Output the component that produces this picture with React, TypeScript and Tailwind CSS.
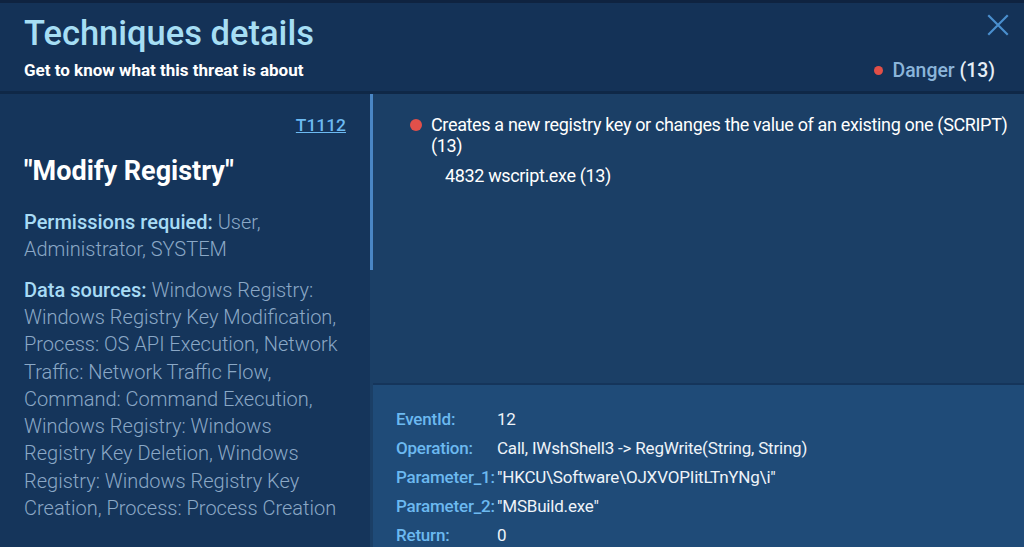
import React from "react";

const rows: [string, string][] = [
  ["EventId:", "12"],
  ["Operation:", "Call, IWshShell3 -> RegWrite(String, String)"],
  ["Parameter_1:", "\"HKCU\\Software\\OJXVOPIitLTnYNg\\i\""],
  ["Parameter_2:", "\"MSBuild.exe\""],
  ["Return:", "0"],
];

function App() {
  return (
    <div
      className="w-[1024px] h-[547px] overflow-hidden flex flex-col bg-[#143257] border-t-[3px] border-[#0f2340]"
      style={{ fontFamily: "Roboto, 'Noto Sans', sans-serif" }}
    >
      {/* header */}
      <div className="h-[91px] shrink-0 flex justify-between pl-6 pr-[13px] border-b-[3px] border-[#0f2847]">
        <div className="pt-[10px]">
          <h1 className="text-[34.5px] leading-[40px] font-medium text-[#a6def4]">Techniques details</h1>
          <p className="mt-[7px] text-[17px] leading-[20px] font-bold text-white">Get to know what this threat is about</p>
        </div>
        <div className="flex flex-col items-end pt-[9px]">
          <button className="text-[#4a8fce]">
            <svg width="26" height="26" viewBox="0 0 24 24" fill="none" stroke="currentColor" strokeWidth="2">
              <path d="M3 3 L21 21 M21 3 L3 21" />
            </svg>
          </button>
          <div className="mt-[18px] mr-[16px] flex items-center gap-[9px] text-[19.4px] font-medium">
            <span className="w-[9px] h-[9px] rounded-full bg-[#e24f47]" />
            <span className="text-[#8bb5da]">
              Danger <span className="text-[#e6eef6]">(13)</span>
            </span>
          </div>
        </div>
      </div>

      {/* body */}
      <div className="flex flex-1 min-h-0">
        <div className="w-[370px] shrink-0 bg-[#15355b] pl-6 pr-[28px] pt-[18px]">
          <div className="text-right -mr-[4px]">
            <a className="text-[17.4px] font-medium text-[#6cbaf2] underline">T1112</a>
          </div>
          <h2 className="mt-[17px] text-[27px] leading-[32px] font-bold text-white">"Modify Registry"</h2>
          <p className="mt-[22px] text-[20px] leading-[27.3px] font-light text-[#8ba8c6]">
            <span className="text-[#a8dbf5] font-medium">Permissions requied:</span> User, Administrator, SYSTEM
          </p>
          <p className="mt-[13px] text-[20px] leading-[27.3px] font-light text-[#8ba8c6]">
            <span className="text-[#a8dbf5] font-medium">Data sources:</span> Windows Registry: Windows Registry Key
            Modification, Process: OS API Execution, Network Traffic: Network Traffic Flow, Command: Command Execution,
            Windows Registry: Windows Registry Key Deletion, Windows Registry: Windows Registry Key Creation, Process:
            Process Creation
          </p>
        </div>
        <div className="w-[3px] shrink-0 bg-[#1b3f66]">
          <div className="h-[176px] bg-[#4a86c4]" />
        </div>

        <div className="flex-1 flex flex-col bg-[#1b3f66]">
          <div className="h-[289px] shrink-0 pl-[37px] pr-[4px] pt-[20px]">
            <div className="flex items-start gap-[9px]">
              <span className="mt-[5px] w-[12px] h-[12px] rounded-full bg-[#e2504a] shrink-0" />
              <p className="text-[18px] leading-[21px] text-white tracking-[-0.35px]">
                Creates a new registry key or changes the value of an existing one (SCRIPT) (13)
              </p>
            </div>
            <p className="mt-[9px] ml-[35px] text-[18px] leading-[21px] text-white tracking-[-0.35px]">
              4832 wscript.exe (13)
            </p>
          </div>
          <div className="flex-1 bg-[#1f4b78] border-t-[2px] border-[#15355b] pl-[23px] pt-[20px]">
            {rows.map(([k, v]) => (
              <div key={k} className="flex h-[29px] items-center text-[17px] tracking-[-0.2px]">
                <span className="w-[101px] shrink-0 whitespace-nowrap text-[#6cb9f0] font-medium">{k}</span>
                <span className="text-[#eef3f8] whitespace-nowrap">{v}</span>
              </div>
            ))}
          </div>
        </div>
      </div>
    </div>
  );
}

export default App;
